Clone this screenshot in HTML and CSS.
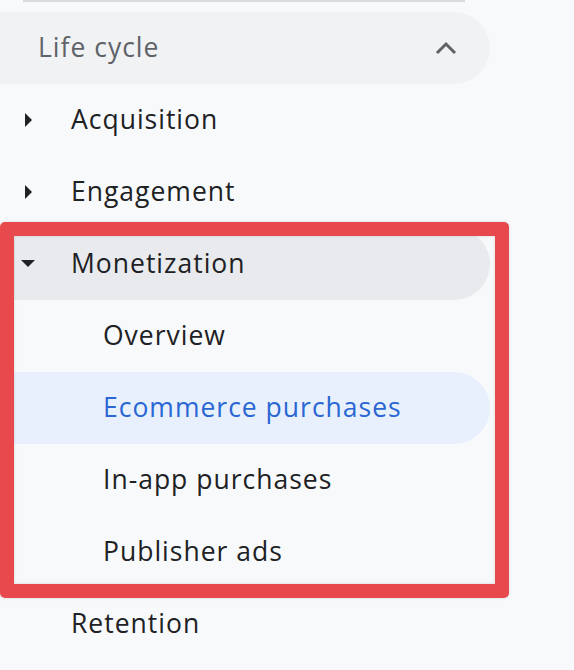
FILE: index.html
```html
<!DOCTYPE html>
<html>
<head lang="en">
    <meta charset="UTF-8">
    <title>Life cycle</title>
    <link rel="stylesheet" href="styles.css">
</head>
<body>
    <div id="nav">
        <div class="divider"></div>
        <div class="row group">
            <span class="label">Life cycle</span>
            <svg class="chevron" width="24" height="16" viewBox="0 0 24 16">
                <path d="M3 13 L12 4 L21 13" fill="none" stroke="#5f6368" stroke-width="3"/>
            </svg>
        </div>
        <div class="row">
            <span class="caret"><svg width="14" height="16" viewBox="0 0 14 16"><path d="M4 1 L11 8 L4 15 Z" fill="#202124"/></svg></span>
            <span class="label">Acquisition</span>
        </div>
        <div class="row">
            <span class="caret"><svg width="14" height="16" viewBox="0 0 14 16"><path d="M4 1 L11 8 L4 15 Z" fill="#202124"/></svg></span>
            <span class="label">Engagement</span>
        </div>
        <div class="row open">
            <span class="caret"><svg width="14" height="16" viewBox="0 0 14 16"><path d="M0 4 L14 4 L7 11 Z" fill="#202124"/></svg></span>
            <span class="label">Monetization</span>
        </div>
        <div class="row sub">
            <span class="label">Overview</span>
        </div>
        <div class="row sub active">
            <span class="label">Ecommerce purchases</span>
        </div>
        <div class="row sub">
            <span class="label">In-app purchases</span>
        </div>
        <div class="row sub">
            <span class="label">Publisher ads</span>
        </div>
        <div class="row">
            <span class="caret"></span>
            <span class="label">Retention</span>
        </div>
        <div id="mark"></div>
    </div>
</body>
</html>
```
FILE: styles.css
```css
*{
    margin: 0;
    padding: 0;
}
body{
    background: #f8f9fa;
    font-family: "Open Sans", "Liberation Sans", sans-serif;
    color: #202124;
}
#nav{
    position: relative;
    width: 574px;
    height: 670px;
    overflow: hidden;
}
.divider{
    height: 2px;
    margin: 0 109px 10px 23px;
    background: #dadce0;
}
.row{
    display: flex;
    align-items: center;
    width: 490px;
    height: 72px;
    border-radius: 0 36px 36px 0;
    font-size: 26.5px;
    font-weight: 500;
    letter-spacing: 1px;
    box-sizing: border-box;
    padding-bottom: 3px;
}
.group{
    justify-content: space-between;
    background: #f1f2f4;
    color: #5f6368;
    font-weight: 400;
    padding: 0 32px 3px 38px;
}
.chevron{
    display: block;
    margin-top: 3px;
}
.caret{
    display: flex;
    align-items: center;
    width: 21px;
    height: 16px;
    margin-left: 21px;
    margin-right: 29px;
    margin-top: 3px;
}
.caret svg{
    display: block;
}
.open{
    background: #e8eaed;
}
.sub{
    padding-left: 103px;
}
.active{
    background: #e8f0fe;
    color: #2a67d3;
}
#mark{
    position: absolute;
    left: 0;
    top: 222px;
    width: 481px;
    height: 348px;
    border: 14px solid #e8494c;
    border-radius: 5px;
    box-shadow: 0 0 3px rgba(0,0,0,0.15), inset 0 0 3px rgba(0,0,0,0.15);
}
```
